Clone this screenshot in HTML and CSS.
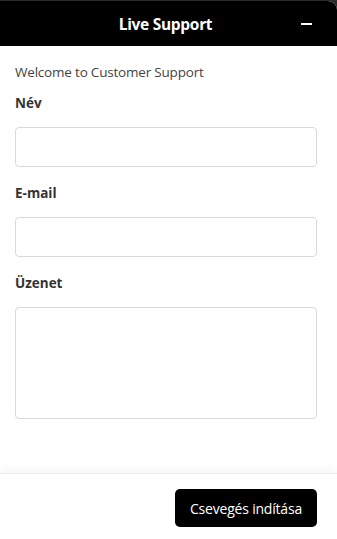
FILE: index.html
```html
<!DOCTYPE html>
<html lang="hu">
<head>
<meta charset="utf-8">
<title>Live Support</title>
<link rel="stylesheet" href="styles.css">
</head>
<body>
<div class="widget">
  <header class="header">
    <h1 class="title">Live Support</h1>
    <button class="minimize" aria-label="Minimize">
      <svg width="11" height="12" viewBox="0 0 11 12"><rect x="0" y="5" width="11" height="2" fill="#fff"/></svg>
    </button>
  </header>
  <main class="body">
    <p class="welcome">Welcome to Customer Support</p>
    <form class="form">
      <label class="field">
        <span class="label">Név</span>
        <input class="input" type="text">
      </label>
      <label class="field">
        <span class="label">E-mail</span>
        <input class="input" type="email">
      </label>
      <label class="field">
        <span class="label">Üzenet</span>
        <textarea class="input textarea"></textarea>
      </label>
    </form>
  </main>
  <footer class="footer">
    <button class="start">Csevegés indítása</button>
  </footer>
</div>
</body>
</html>
```

FILE: styles.css
```css
* { box-sizing: border-box; }
html, body { margin: 0; padding: 0; height: 100%; }
body {
  background: #2b2b2b;
  font-family: "Open Sans", "Noto Sans", sans-serif;
  overflow: hidden;
}
.widget {
  margin-top: 1px;
  height: calc(100% - 1px);
  background: #fff;
  border-top-right-radius: 9px;
  overflow: hidden;
  display: flex;
  flex-direction: column;
}
.header {
  height: 45px;
  background: #000;
  color: #fff;
  display: flex;
  align-items: center;
  justify-content: center;
  position: relative;
  flex: none;
}
.title {
  margin: 0 0 0 -6px;
  font-size: 15.5px;
  font-weight: 700;
  letter-spacing: -0.3px;
}
.minimize {
  position: absolute;
  right: 25px;
  top: 17px;
  background: none;
  border: 0;
  padding: 0;
  width: 11px;
  height: 12px;
  display: flex;
}
.body {
  flex: 1;
  padding: 16px 20px 0 15px;
}
.welcome {
  margin: 0 0 13px;
  font-size: 13.5px;
  color: #444;
  letter-spacing: -0.2px;
  line-height: 20px;
}
.form {
  display: flex;
  flex-direction: column;
  gap: 18px;
}
.field {
  display: flex;
  flex-direction: column;
  gap: 16px;
}
.label {
  font-size: 13.5px;
  font-weight: 700;
  color: #333;
  line-height: 16px;
}
.input {
  display: block;
  width: 100%;
  height: 40px;
  border: 1px solid #d9d9d9;
  border-radius: 4px;
  font: inherit;
  padding: 8px;
  background: #fff;
  margin: 0;
}
.textarea {
  height: 112px;
  resize: none;
}
.footer {
  flex: none;
  height: 66px;
  border-top: 1px solid #ececec;
  box-shadow: 0 -4px 10px rgba(0,0,0,0.04);
  display: flex;
  align-items: flex-start;
  justify-content: flex-end;
  padding: 15px 20px 0 0;
}
.start {
  background: #000;
  color: #fff;
  border: 0;
  border-radius: 5px;
  height: 38px;
  padding: 0 15px;
  font-family: inherit;
  font-size: 14px;
  letter-spacing: -0.2px;
}
```
